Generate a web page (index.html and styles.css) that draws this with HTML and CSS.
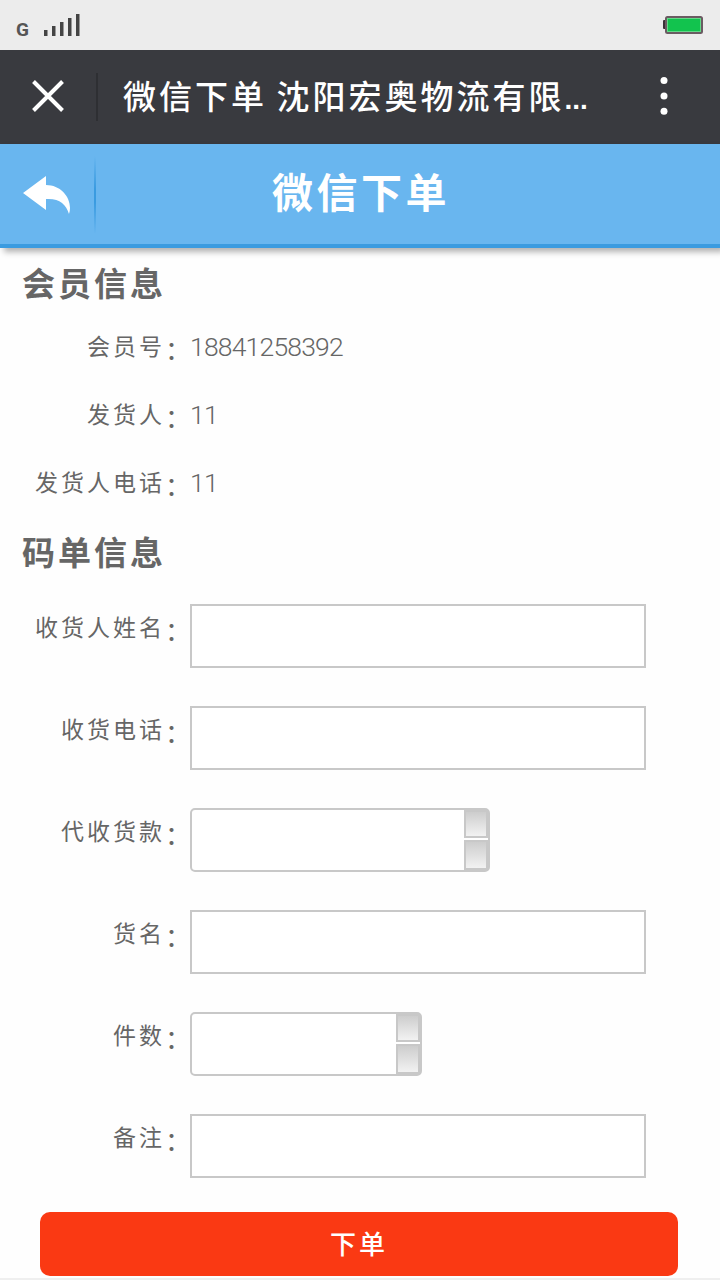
FILE: index.html
```html
<!DOCTYPE html>
<html lang="zh-CN">
<head>
<meta charset="utf-8">
<title>微信下单</title>
<link rel="stylesheet" href="styles.css">
</head>
<body>
<div class="status">
  <div class="network">
    <span class="carrier">G</span>
    <svg class="signal" width="38" height="24" viewBox="0 0 38 24" fill="#444"><path d="M1 17h3.500v6H1zM9 13h3.500v10H9zM17 9h3.500v14h-3.500zM25 5h3.500v18h-3.500zM33 1h3.500v22h-3.500z"/></svg>
  </div>
  <svg class="battery" width="42" height="20" viewBox="0 0 42 20"><rect x="1" y="5" width="4" height="9" rx="1" fill="#3a3237"/><rect x="4" y="2" width="36" height="16" rx="1.5" fill="#12c34e" stroke="#6b5b62" stroke-width="2"/><rect x="5.5" y="3.5" width="33" height="13" fill="none" stroke="#62d888"/></svg>
</div>
<header class="wechat">
  <div class="close"><svg width="32" height="32" viewBox="0 0 32 32"><path d="M1.5 1.5l29 29M30.500 1.500l-29 29" stroke="#fff" stroke-width="4" fill="none"/></svg></div>
  <div class="page-title">微信下单 沈阳宏奥物流有限<span class="dots">...</span></div>
  <svg class="more" width="8" height="40" viewBox="0 0 8 40" fill="#fff"><circle cx="4" cy="4.500" r="3.500"/><circle cx="4" cy="20" r="3.500"/><circle cx="4" cy="35.300" r="3.500"/></svg>
</header>
<nav class="bar">
  <div class="back"><svg width="48" height="38" viewBox="0 0 48 38"><path d="M0 17L23 0V9C37 9 47 20 47 32Q47 35 46 38C43 28 36 22 23 23V34Z" fill="#fff"/></svg></div>
  <h1 class="bar-title">微信下单</h1>
</nav>
<main class="content">
  <h2 class="section">会员信息</h2>
  <div class="info"><span class="label">会员号<i class="colon">：</i></span><span class="value">18841258392</span></div>
  <div class="info"><span class="label">发货人<i class="colon">：</i></span><span class="value">11</span></div>
  <div class="info"><span class="label">发货人电话<i class="colon">：</i></span><span class="value">11</span></div>
  <h2 class="section order">码单信息</h2>
  <div class="field"><span class="label">收货人姓名<i class="colon">：</i></span><div class="input"></div></div>
  <div class="field"><span class="label">收货电话<i class="colon">：</i></span><div class="input"></div></div>
  <div class="field"><span class="label">代收货款<i class="colon">：</i></span><div class="input number amount"><div class="spin"><b class="step"></b><b class="step"></b></div></div></div>
  <div class="field"><span class="label">货名<i class="colon">：</i></span><div class="input"></div></div>
  <div class="field"><span class="label">件数<i class="colon">：</i></span><div class="input number count"><div class="spin"><b class="step"></b><b class="step"></b></div></div></div>
  <div class="field"><span class="label">备注<i class="colon">：</i></span><div class="input"></div></div>
  <div class="submit">下单</div>
</main>
<footer class="foot"></footer>
</body>
</html>
```

FILE: styles.css
```css
* { box-sizing: border-box; }
body {
  margin: 0;
  width: 720px;
  height: 1280px;
  overflow: hidden;
  display: flex;
  flex-direction: column;
  background: #fefefe;
  color: #666;
  font-family: "Noto Sans CJK SC", sans-serif;
}
svg { display: block; }
.status {
  height: 50px;
  background: #ececec;
  display: flex;
  justify-content: space-between;
  padding: 0 16px;
}
.network { display: flex; }
.carrier {
  width: 27px;
  padding-top: 17px;
  font: bold 19px/26px Roboto, sans-serif;
  color: #555;
}
.signal { margin-top: 13px; }
.battery { margin-top: 15px; }
.wechat {
  height: 94px;
  background: #393a3f;
  display: flex;
  align-items: center;
}
.close {
  width: 98px;
  height: 48px;
  padding: 7px 0 0 32px;
  border-right: 2px solid #2e2f33;
}
.page-title {
  width: 558px;
  padding-left: 25px;
  color: #fff;
  font-size: 33px;
  font-weight: 500;
  line-height: 48px;
  letter-spacing: 3px;
  white-space: nowrap;
  word-spacing: -1px;
}
.dots {
  font-family: "Liberation Sans", sans-serif;
  font-size: 28px;
  font-weight: 700;
  letter-spacing: 0;
}
.more { margin: -2px 0 0 4px; }
.bar {
  height: 104px;
  background: #69b6ef;
  border-bottom: 4px solid #3a9be0;
  box-shadow: 4px 4px 6px rgba(0, 0, 0, .3);
  display: flex;
}
.back {
  width: 96px;
  height: 100px;
  padding: 32px 0 0 23px;
  background: linear-gradient(#69b6ef 12%, #3a9be0 45%, #3a9be0 58%, #69b6ef 90%) right / 2px 100% no-repeat;
}
.bar-title {
  width: 530px;
  margin: 0;
  text-align: center;
  color: #fff;
  font-size: 41px;
  font-weight: 700;
  line-height: 92px;
  letter-spacing: 3.500px;
}
.content {
  height: 1030px;
  display: flex;
  flex-direction: column;
}
.section {
  height: 65px;
  margin: 0;
  padding-left: 22px;
  font-size: 33px;
  font-weight: 700;
  line-height: 68px;
  letter-spacing: 3px;
}
.order { height: 87px; line-height: 69px; }
.info {
  height: 68px;
  display: flex;
  line-height: 68px;
}
.info .label { line-height: 65px; }
.label {
  width: 191px;
  margin-right: -1px;
  flex: none;
  text-align: right;
  font-size: 23px;
  line-height: 44px;
  letter-spacing: 3px;
}
.colon {
  font-size: 26px;
  font-style: normal;
  line-height: 0;
  letter-spacing: 0;
  vertical-align: -5px;
}
.value {
  font-family: Roboto, sans-serif;
  font-size: 26.500px;
  font-weight: 300;
  letter-spacing: -.8px;
}
.field {
  height: 102px;
  display: flex;
}
.input {
  width: 456px;
  height: 64px;
  border: 2px solid #c8c8c8;
  background: #fff;
}
.number {
  display: flex;
  justify-content: flex-end;
  border-radius: 5px;
}
.amount { width: 300px; }
.count { width: 232px; }
.spin {
  width: 24px;
  display: grid;
  grid-template-rows: 28px 30px;
  gap: 2px;
}
.step {
  border: 2px solid #c8c8c8;
  background: linear-gradient(#cdcdcd, #f2f2f2) padding-box;
}
.submit {
  width: 638px;
  height: 64px;
  flex: none;
  margin: -4px 0 0 40px;
  border-radius: 10px;
  background: #fa3913;
  color: #fff;
  text-align: center;
  font-size: 26px;
  font-weight: 500;
  line-height: 62px;
  letter-spacing: 3px;
}
.foot { height: 2px; background: #efefef; }
```
